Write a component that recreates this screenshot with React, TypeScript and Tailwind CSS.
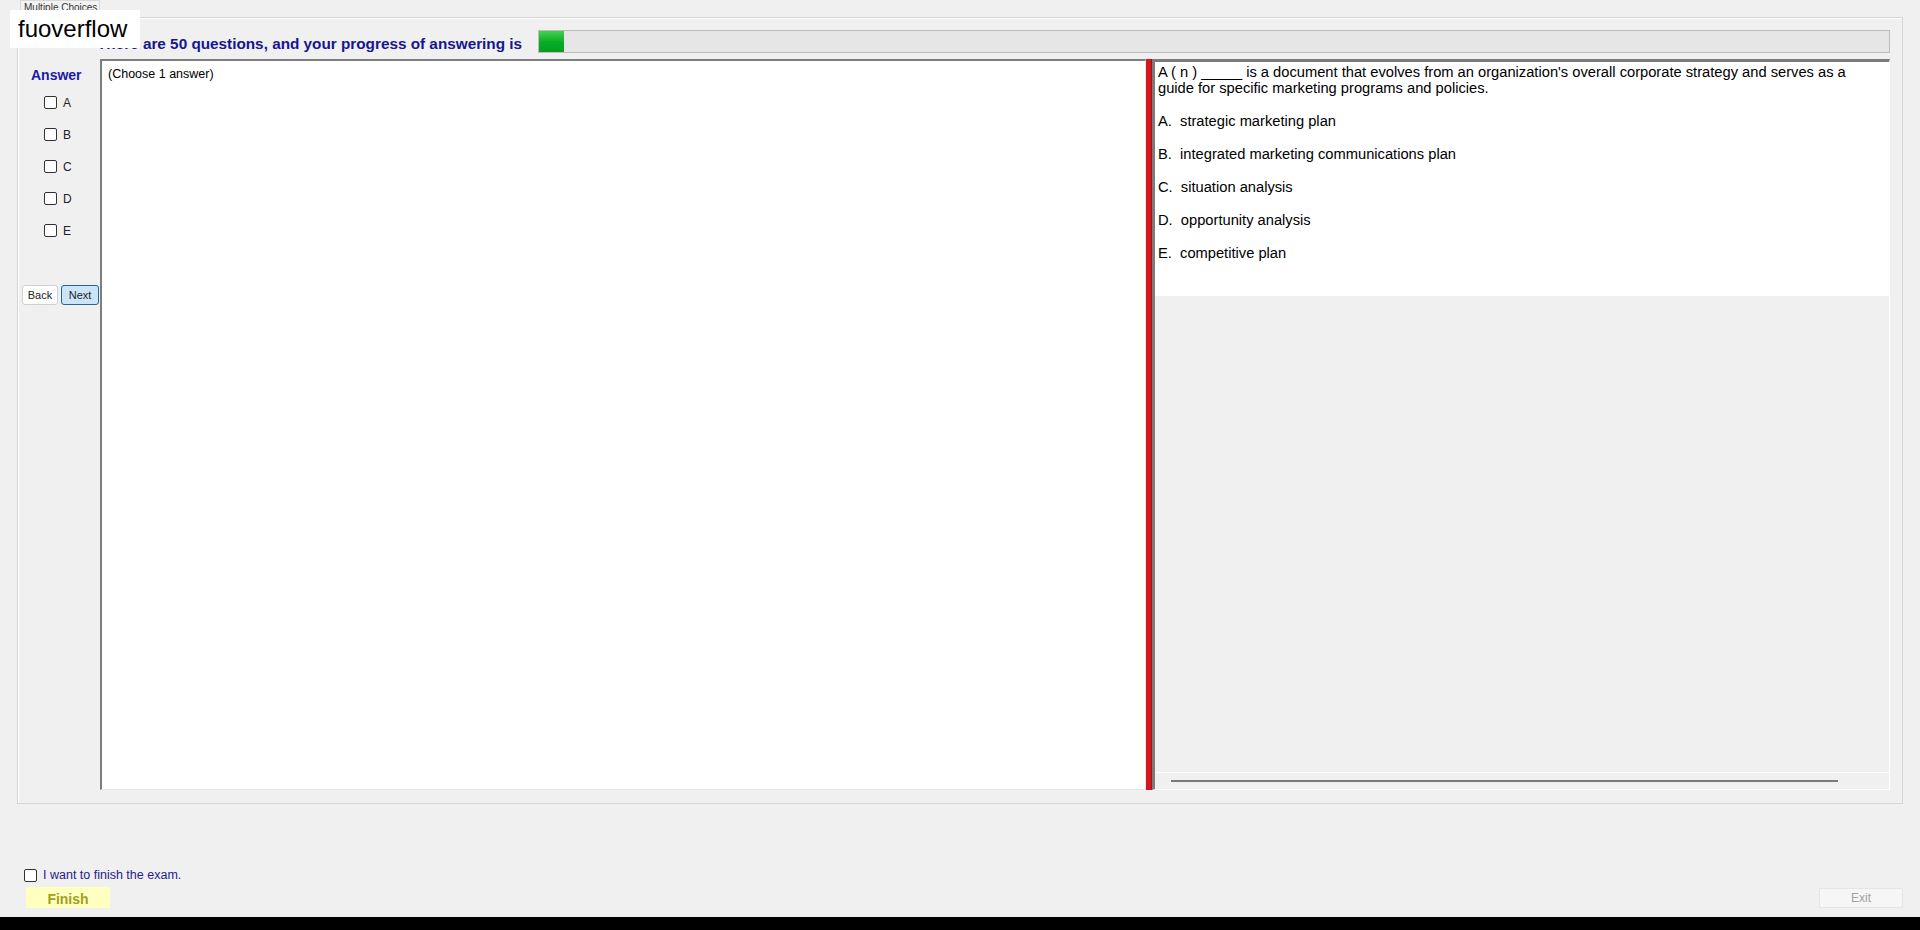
export default function App() {
  const letters = ['A', 'B', 'C', 'D', 'E'];
  const options = [
    'A.  strategic marketing plan',
    'B.  integrated marketing communications plan',
    'C.  situation analysis',
    'D.  opportunity analysis',
    'E.  competitive plan',
  ];

  return (
    <div className="w-[1920px] h-[930px] bg-[#f0f0f0] flex flex-col font-['Liberation_Sans',Arial,sans-serif] text-black overflow-hidden">
      <div className="relative h-[917px] flex flex-col">
        {/* watermark */}
        <div className="absolute left-[10px] top-[10px] w-[130px] h-[38px] bg-white pl-[8px] flex items-center text-[24px] leading-none z-10">
          fuoverflow
        </div>

        {/* tab strip */}
        <div className="h-[17px] pl-[20px] flex">
          <div className="w-[80px] h-[17px] border border-b-0 border-[#d9d9d9] bg-[#f3f3f3] text-[10px] leading-[13px] pl-[3px] text-[#333]">
            Multiple Choices
          </div>
        </div>

        {/* group frame */}
        <div className="ml-[17px] w-[1886px] h-[787px] border border-[#d5d5d5] shadow-[inset_1px_1px_0_#ffffff] flex flex-col pt-[12px]">
          {/* heading row */}
          <div className="h-[23px] flex items-center pl-[79px] pr-[12px]">
            <div className="whitespace-nowrap text-[15.3px] font-bold text-[#16168f] leading-none pt-[4px]">
              There are 50 questions, and your progress of answering is
            </div>
            <div className="ml-auto w-[1352px] h-[23px] border border-[#bcbcbc] bg-[#e6e6e6] flex">
              <div className="w-[25px] h-full bg-gradient-to-b from-[#3fd04f] via-[#06b025] to-[#0a9a22]" />
            </div>
          </div>

          {/* content row */}
          <div className="mt-[6px] h-[731px] flex">
            {/* answer column */}
            <div className="w-[82px] flex flex-col">
              <div className="pl-[13px] pt-[8px] text-[14px] font-bold text-[#1a1aa6] leading-[16px]">Answer</div>
              <div className="mt-[13px] flex flex-col gap-[19px] pl-[26px]">
                {letters.map((l) => (
                  <label key={l} className="flex items-center gap-[6px] h-[13px] text-[12px] text-[#222]">
                    <span className="w-[13px] h-[13px] border border-[#333] rounded-[2px] bg-white" />
                    {l}
                  </label>
                ))}
              </div>
              <div className="mt-[48px] pl-[4px] flex gap-[3px]">
                <button className="w-[36px] h-[20px] bg-white border border-[#d0d0d0] rounded-[3px] text-[11px] text-[#222] leading-none">
                  Back
                </button>
                <button className="w-[38px] h-[20px] bg-[#cce4f7] border border-[#2c628b] rounded-[3px] text-[11px] text-[#222] leading-none">
                  Next
                </button>
              </div>
            </div>

            {/* answer area */}
            <div className="w-[1046px] h-full bg-white border-t-2 border-l-2 border-[#7d7d7d] border-r border-b border-r-[#e6e6e6] border-b-[#e6e6e6] pl-[6px] pt-[6px] text-[12.5px] leading-[14px]">
              (Choose 1 answer)
            </div>

            {/* splitter */}
            <div className="w-[6px] h-full bg-[#d4171e] border-r border-[#a01015]" />

            {/* question panel */}
            <div className="w-[738px] h-full flex flex-col border-t-[3px] border-l-[3px] border-[#7b7b7b] border-r border-b border-r-white border-b-white">
              <div className="h-[234px] bg-white pl-[3px] pt-[2px] text-[14.7px] leading-[16px]">
                <div className="w-[720px]">
                  A ( n ) _____ is a document that evolves from an organization's overall corporate strategy and serves as a guide for specific marketing programs and policies.
                </div>
                <div className="mt-[17px] flex flex-col gap-[17px]">
                  {options.map((o) => (
                    <div key={o} className="whitespace-pre">{o}</div>
                  ))}
                </div>
              </div>
              <div className="flex-1" />
              <div className="h-[17px] border-t border-white flex items-center pl-[16px]">
                <div className="w-[667px] h-[2px] bg-[#7a7a7a]" />
              </div>
            </div>
          </div>
        </div>

        {/* bottom controls */}
        <div className="flex-1 flex items-end justify-between pb-[9px] pr-[17px]">
          <div className="flex flex-col pl-[24px]">
            <label className="flex items-center gap-[6px] h-[13px] text-[12.5px] text-[#2a1b8c]">
              <span className="w-[13px] h-[13px] border border-[#333] rounded-[2px] bg-white" />
              I want to finish the exam.
            </label>
            <button className="mt-[5px] ml-[2px] w-[84px] h-[21px] bg-[#ffffc0] text-[14px] font-bold text-[#a0a01c] leading-none pt-[2px]">
              Finish
            </button>
          </div>
          <button className="w-[84px] h-[20px] bg-[#f6f6f6] border border-[#e4e4e4] rounded-[2px] text-[12px] text-[#a0a0a0] leading-none">
            Exit
          </button>
        </div>
      </div>
      <div className="h-[13px] bg-black" />
    </div>
  );
}
